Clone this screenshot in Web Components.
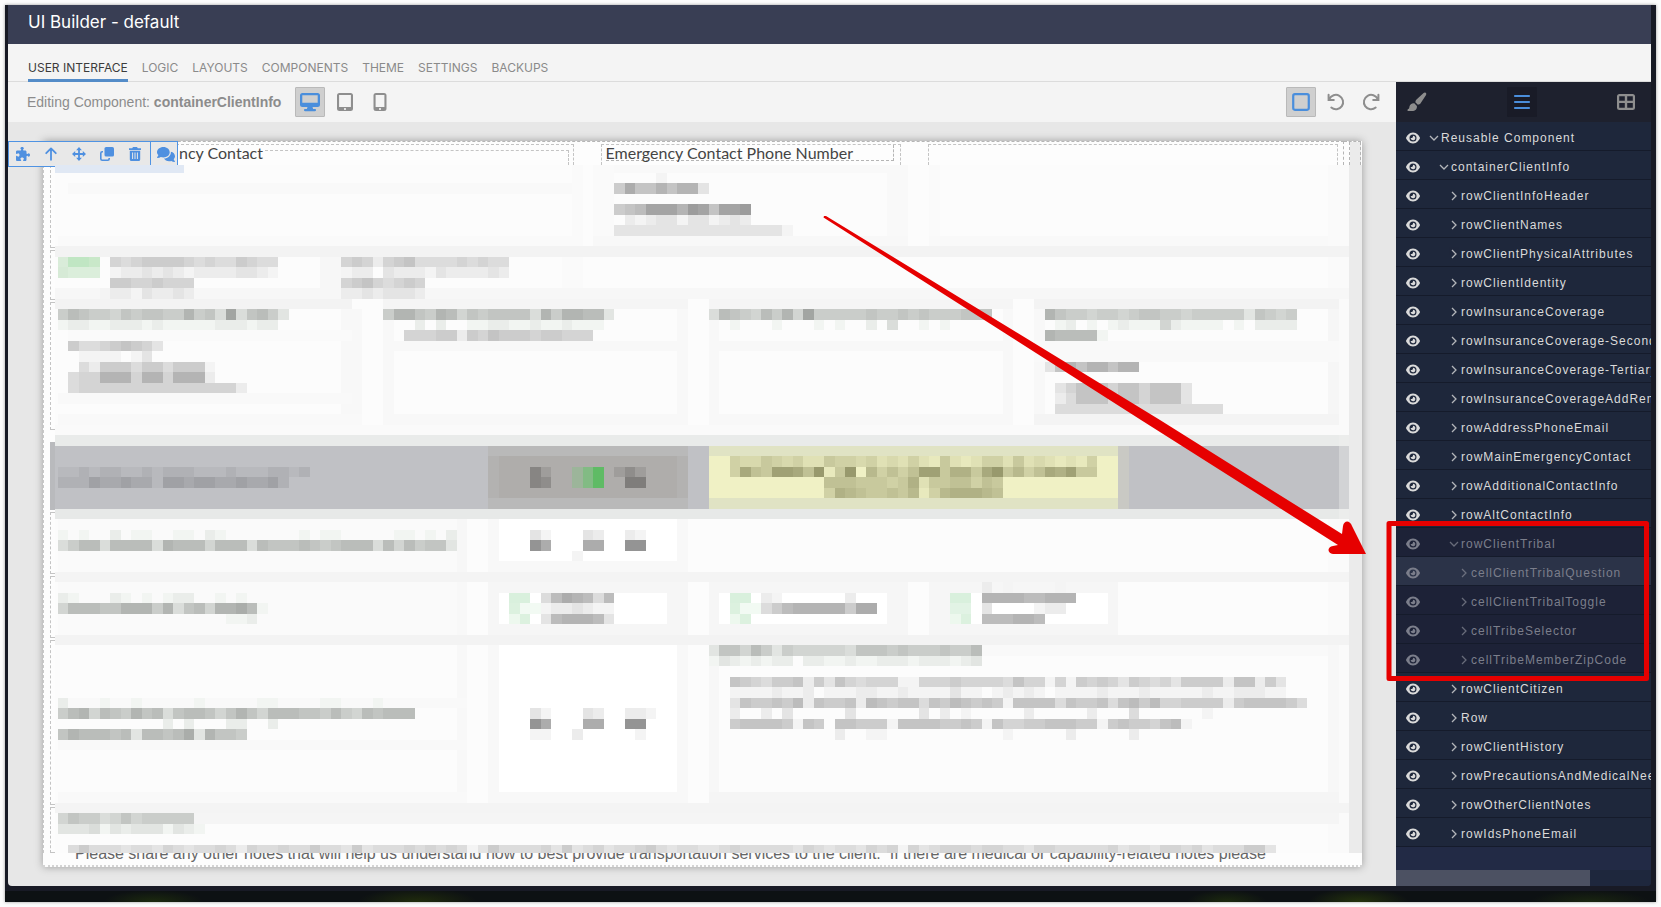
<!DOCTYPE html>
<html lang="en">
<head>
<meta charset="utf-8">
<title>UI Builder - default</title>
<style>
  html, body {
    height: 100%;
    margin: 0;
  }
  body {
    background-color: #fcfcfc;
    font-family: "Liberation Sans", Arial, sans-serif;
  }
</style>
</head>
<body>
<builder-app></builder-app>

<script>
/**
 * Icon shapes, keyed by name. Each entry holds the viewBox and the markup.
 */
const ICONS = {
  desktop: ['0 0 20 20', '<path fill="currentColor" fill-rule="evenodd" d="M2.5 1h15A2.5 2.5 0 0 1 20 3.500v9A2.500 2.500 0 0 1 17.500 15h-5l.6 2H15a1 1 0 0 1 0 2.200H5A1 1 0 0 1 5 17h1.900l.6-2h-5A2.500 2.500 0 0 1 0 12.500v-9A2.500 2.500 0 0 1 2.500 1zM2.300 3.300v7.500h15.400V3.300z"/>'],
  tablet: ['0 0 18 20', '<path fill="currentColor" fill-rule="evenodd" d="M3.500 1h11A2.500 2.500 0 0 1 17 3.500v13a2.500 2.500 0 0 1-2.500 2.500h-11A2.500 2.500 0 0 1 1 16.500v-13A2.500 2.500 0 0 1 3.500 1zm-.4 2.100v11.800h11.800V3.100zM9 15.900a1.100 1.100 0 1 0 0 2.200 1.100 1.100 0 0 0 0-2.200z"/>'],
  phone: ['0 0 18 20', '<path fill="currentColor" fill-rule="evenodd" d="M5 1h8a2.500 2.500 0 0 1 2.500 2.500v13A2.500 2.500 0 0 1 13 19H5a2.500 2.500 0 0 1-2.500-2.500v-13A2.500 2.500 0 0 1 5 1zm-.4 2.100v11.800h8.800V3.100zM9 15.900a1.100 1.100 0 1 0 0 2.200 1.100 1.100 0 0 0 0-2.200z"/>'],
  square: ['0 0 18 18', '<rect x="2" y="2" width="14" height="14" rx="1.500" fill="none" stroke="currentColor" stroke-width="2"/>'],
  undo: ['0 0 18 18', '<path fill="none" stroke="currentColor" stroke-width="2" stroke-linecap="round" d="M2.300 6.200A7.200 7.200 0 1 1 4.300 14.600M1.600 1.800v5.200h5.200"/>'],
  redo: ['0 0 18 18', '<path fill="none" stroke="currentColor" stroke-width="2" stroke-linecap="round" d="M15.700 6.200A7.200 7.200 0 1 0 13.700 14.600M16.400 1.800v5.200h-5.200"/>'],
  brush: ['0 0 20 20', '<path fill="currentColor" d="M18.600.7c.9.700.9 1.600.3 2.600l-5.300 8c-.7 1-1.700 1.400-2.700 1.500L8.300 10.200c.1-1 .4-1.800 1.200-2.600L16.600.9c.7-.6 1.400-.7 2-.2zM7.300 11.300l2.600 2.600c.4 3-1.600 5.200-5 5.200H1.300c-1.100 0-1.300-1.300-.3-1.800 1.200-.5 1.300-1.300 1.400-2.500.3-2.200 2.500-3.800 4.900-3.500z"/>'],
  bars: ['0 0 18 18', '<path fill="none" stroke="currentColor" stroke-width="2.200" stroke-linecap="round" d="M2 3h14M2 9h14M2 15h14"/>'],
  grid: ['0 0 20 20', '<path fill="currentColor" fill-rule="evenodd" d="M3.500 2h13A2.500 2.500 0 0 1 19 4.500v11a2.500 2.500 0 0 1-2.500 2.500h-13A2.500 2.500 0 0 1 1 15.500v-11A2.500 2.500 0 0 1 3.500 2zM3.200 4.200v4.500h5.600V4.200zm8 0v4.500h5.600V4.200zm-8 6.900v4.700h5.600v-4.700zm8 0v4.700h5.600v-4.700z"/>'],
  puzzle: ['0 0 512 512', '<path fill="currentColor" d="M192 104.800c0-9.200-5.800-17.300-13.200-22.800C167.200 73.300 160 61.300 160 48c0-26.500 28.700-48 64-48s64 21.500 64 48c0 13.300-7.200 25.300-18.800 34c-7.400 5.500-13.200 13.600-13.200 22.800c0 12.800 10.400 23.200 23.200 23.200H336c26.500 0 48 21.500 48 48v56.800c0 12.800 10.400 23.200 23.200 23.200c9.200 0 17.300-5.800 22.800-13.200c8.700-11.600 20.700-18.800 34-18.800c26.500 0 48 28.700 48 64s-21.500 64-48 64c-13.300 0-25.300-7.200-34-18.800c-5.500-7.400-13.600-13.200-22.800-13.200c-12.800 0-23.200 10.400-23.200 23.200V464c0 26.500-21.500 48-48 48H279.200c-12.800 0-23.200-10.400-23.200-23.200c0-9.200 5.800-17.300 13.200-22.800c11.600-8.700 18.800-20.700 18.800-34c0-26.500-28.700-48-64-48s-64 21.500-64 48c0 13.300 7.200 25.300 18.800 34c7.400 5.500 13.200 13.600 13.200 22.800c0 12.800-10.400 23.200-23.200 23.200H48c-26.500 0-48-21.500-48-48V343.200C0 330.400 10.400 320 23.200 320c9.200 0 17.300 5.800 22.800 13.200C54.700 344.800 66.700 352 80 352c26.500 0 48-28.700 48-64s-21.500-64-48-64c-13.300 0-25.300 7.200-34 18.800C40.500 250.200 32.400 256 23.200 256C10.400 256 0 245.600 0 232.800V176c0-26.500 21.500-48 48-48H168.800c12.800 0 23.200-10.400 23.200-23.200z"/>'],
  up: ['0 0 14 14', '<path fill="none" stroke="currentColor" stroke-width="1.800" stroke-linecap="round" stroke-linejoin="round" d="M7 12.800V1.500M2.200 6.200L7 1.400l4.800 4.800"/>'],
  move: ['0 0 14 14', '<path fill="currentColor" d="M7 0l2.900 3.200H7.900v2.900h2.900V4.100L14 7l-3.200 2.900V7.900H7.900v2.900h2L7 14l-2.900-3.200h2V7.900H3.200v2L0 7l3.200-2.900v2h2.900V3.200h-2z"/>'],
  copy: ['0 0 14 14', '<rect x="4.500" y="0" width="9.500" height="9.500" rx="1.600" fill="currentColor"/><path fill="none" stroke="currentColor" stroke-width="1.600" d="M3 4.800H2.200A1.400 1.400 0 0 0 .8 6.200v5.600a1.400 1.400 0 0 0 1.400 1.400h5.600a1.400 1.400 0 0 0 1.400-1.400V11"/>'],
  trash: ['0 0 14 14', '<path fill="currentColor" fill-rule="evenodd" d="M5 0h4l.8 1.200H13v1.700H1V1.200h3.200zM1.800 3.700h10.400v8.700a1.600 1.600 0 0 1-1.600 1.600H3.400a1.600 1.600 0 0 1-1.600-1.600zM4.100 5.600v6.400h1V5.600zm2.400 0v6.400h1V5.600zm2.400 0v6.400h1V5.600z"/>'],
  chat: ['0 0 18 15', '<path fill="currentColor" d="M6.400 0c3.600 0 6.300 2.300 6.300 5.200s-2.700 5.200-6.300 5.200c-.9 0-1.800-.2-2.600-.5-.9.600-2 1-3.300 1-.5 0-.6-.5-.3-.8.600-.6 1-1.300 1.200-2.100C.5 7.200 0 6.200 0 5.200 0 2.300 2.800 0 6.400 0zM13.800 4.700c2.500.4 4.200 2.300 4.200 4.600 0 1.100-.5 2.100-1.300 2.900.2.700.6 1.300 1.100 1.900.3.300.1.800-.3.800-1.200 0-2.300-.4-3.100-1-.7.200-1.500.4-2.300.4-2.300 0-4.300-1.100-5.100-2.700 3.700-.1 6.900-2.700 6.900-6.300z"/>'],
  eye: ['0 0 576 512', '<path fill="currentColor" d="M288 32c-80.800 0-145.500 36.800-192.600 80.600C48.600 156 17.300 208 2.500 243.700c-3.300 7.900-3.300 16.700 0 24.600C17.300 304 48.600 356 95.400 399.400C142.500 443.200 207.200 480 288 480s145.500-36.800 192.600-80.600c46.800-43.500 78.100-95.400 93-131.100c3.300-7.900 3.300-16.700 0-24.600c-14.900-35.700-46.200-87.700-93-131.100C433.500 68.800 368.800 32 288 32zM144 256a144 144 0 1 1 288 0 144 144 0 1 1-288 0zm144-64c0 35.300-28.700 64-64 64c-7.100 0-13.900-1.200-20.300-3.300c-5.500-1.800-11.900 1.600-11.700 7.400c.3 6.900 1.300 13.800 3.200 20.700c13.700 51.200 66.400 81.600 117.600 67.900s81.600-66.400 67.900-117.600c-11.100-41.500-47.800-69.400-88.600-71.100c-5.800-.2-9.200 6.100-7.400 11.700c2.100 6.400 3.300 13.200 3.300 20.300z"/>'],
  right: ['0 0 10 10', '<path fill="none" stroke="currentColor" stroke-width="1.300" d="M3 1l4 4-4 4"/>'],
  down: ['0 0 10 10', '<path fill="none" stroke="currentColor" stroke-width="1.300" d="M1 3l4 4 4-4"/>']
}

/**
 * Attaches an open shadow root holding the given markup.
 *
 * @param {HTMLElement} host - The element to render into.
 * @param {string} markup - Styles and markup.
 * @returns {ShadowRoot} The shadow root.
 */
const render = (host, markup) => {
  const template = document.createElement('template')
  template.innerHTML = markup
  const root = host.attachShadow({ mode: 'open' })
  root.appendChild(template.content.cloneNode(true))
  return root
}

customElements.define('ui-icon',
  /**
   * Represents an icon, picked with the name attribute.
   */
  class extends HTMLElement {
    connectedCallback () {
      if (this.shadowRoot) return
      const [box, shape] = ICONS[this.getAttribute('name')]
      render(this, `
        <style>
          :host { display: inline-flex; width: 18px; height: 18px; flex: none; }
          svg { width: 100%; height: 100%; }
        </style>
        <svg viewBox="${box}" aria-hidden="true">${shape}</svg>
      `)
    }
  }
)

customElements.define('tool-button',
  /**
   * Represents a square icon button.
   */
  class extends HTMLElement {
    connectedCallback () {
      if (this.shadowRoot) return
      render(this, `
        <style>
          :host { display: block; color: #8e8e8e; }
          button {
            display: flex;
            align-items: center;
            justify-content: center;
            box-sizing: border-box;
            width: 30px;
            height: 30px;
            padding: 0;
            border: 1px solid transparent;
            border-radius: 1px;
            background: none;
            color: inherit;
            cursor: pointer;
          }
          :host([active]) { color: #4a8edc; }
          :host([active]) button { background-color: #cfcfcf; border-color: #b9b9b9; }
          :host([dark][active]) button { background-color: #191b27; border-color: #191b27; }
          ui-icon { width: 20px; height: 20px; }
          :host([small]) ui-icon { width: 18px; height: 18px; }
        </style>
        <button aria-label="${this.getAttribute('label')}"><ui-icon name="${this.getAttribute('icon')}"></ui-icon></button>
      `)
    }
  }
)

customElements.define('app-header',
  /**
   * Represents the title bar.
   */
  class extends HTMLElement {
    constructor () {
      super()
      render(this, `
        <style>
          :host {
            display: flex;
            align-items: center;
            box-sizing: border-box;
            height: 39px;
            padding: 0 20px 6px;
            background-color: #393e54;
            color: #fff;
          }
          h1 { margin: 0; font: 400 17px/22px Inter, sans-serif; }
        </style>
        <h1><slot></slot></h1>
      `)
    }
  }
)

customElements.define('app-tabs',
  /**
   * Represents the main navigation.
   */
  class extends HTMLElement {
    constructor () {
      super()
      render(this, `
        <style>
          :host {
            display: flex;
            align-items: flex-end;
            gap: 14px;
            box-sizing: border-box;
            height: 38px;
            padding: 0 20px;
            background-color: #f4f4f4;
            border-bottom: 1px solid #dcdcdc;
          }
          ::slotted(a) {
            padding-bottom: 1px;
            border-bottom: 3px solid transparent;
            margin-bottom: -1px;
            color: #8a8a8a;
            font: 400 12px/20px Inter, sans-serif;
            text-decoration: none;
          }
          ::slotted(a[aria-current]) {
            border-color: #548cc8;
            color: #3c3c3c;
          }
        </style>
        <slot></slot>
      `)
    }
  }
)

customElements.define('editor-toolbar',
  /**
   * Represents the bar above the canvas.
   */
  class extends HTMLElement {
    constructor () {
      super()
      render(this, `
        <style>
          :host {
            display: flex;
            align-items: center;
            gap: 5px;
            box-sizing: border-box;
            height: 40px;
            padding: 0 10px 0 19px;
            background-color: #f4f4f4;
            color: #8c8c8c;
            font-size: 14px;
          }
          p { margin: 0 9px 0 0; }
          .space { flex: 1; }
        </style>
        <p>Editing Component: <b><slot></slot></b></p>
        <tool-button icon="desktop" label="Desktop" active></tool-button>
        <tool-button icon="tablet" label="Tablet"></tool-button>
        <tool-button icon="phone" label="Phone"></tool-button>
        <span class="space"></span>
        <tool-button icon="square" label="Borders" active></tool-button>
        <tool-button icon="undo" label="Undo" small></tool-button>
        <tool-button icon="redo" label="Redo" small></tool-button>
      `)
    }
  }
)

customElements.define('component-actions',
  /**
   * Represents the floating actions of the selected component.
   */
  class extends HTMLElement {
    constructor () {
      super()
      render(this, `
        <style>
          :host {
            display: flex;
            box-sizing: border-box;
            width: 170px;
            height: 26px;
            border: 1px solid #4f93e3;
            background-color: #e8e8e8;
            color: #4f90e0;
          }
          .group { display: flex; flex: 1; justify-content: space-between; padding: 0 8px 0 7px; }
          .group + .group { flex: none; padding: 0 2px 0 6px; border-left: 1px solid #4f93e3; }
          button { display: flex; align-items: center; padding: 0; border: 0; background: none; color: inherit; }
          ui-icon { width: 14px; height: 14px; }
          .chat { width: 18px; height: 15px; }
        </style>
        <div class="group">
          <button aria-label="Component"><ui-icon name="puzzle"></ui-icon></button>
          <button aria-label="Select parent"><ui-icon name="up"></ui-icon></button>
          <button aria-label="Move"><ui-icon name="move"></ui-icon></button>
          <button aria-label="Copy"><ui-icon name="copy"></ui-icon></button>
          <button aria-label="Delete"><ui-icon name="trash"></ui-icon></button>
        </div>
        <div class="group">
          <button aria-label="Comments"><ui-icon class="chat" name="chat"></ui-icon></button>
        </div>
      `)
    }
  }
)

// Flat areas of the pixelated form: column, row, width, height, colour.
const AREAS = [
  [-1, 0, 124, 66, '#fcfcfc'],
  [-1, 0, 13, 1, '#e0e8f4'],
  [1, 2, 48, 1, '#f9f9f9'], [49, 0, 1, 8, '#fafafa'], [0, 7, 50, 1, '#fafafa'],
  [51, 0, 30, 1, '#f9f9f9'], [51, 0, 2, 8, '#fafafa'], [79, 0, 2, 8, '#f9f9f9'], [51, 7, 30, 1, '#f8f8f8'],
  [83, 0, 1, 8, '#fafafa'], [83, 7, 39, 1, '#f9f9f9'], [121, 0, 2, 66, '#fafafa'],
  [-1, 8, 124, 1, '#f3f3f3'],
  [25, 9, 2, 4, '#f7f7f7'], [48, 9, 2, 4, '#fafafa'], [-1, 12, 124, 1, '#f7f7f7'],
  [-1, 13, 29, 1, '#f3f3f3'], [31, 13, 29, 1, '#f5f5f5'], [62, 13, 29, 1, '#f5f5f5'], [93, 13, 29, 1, '#f3f3f3'],
  [27, 14, 2, 11, '#f8f8f8'], [31, 14, 1, 11, '#f8f8f8'], [59, 14, 1, 11, '#f8f8f8'],
  [62, 14, 1, 11, '#f8f8f8'], [90, 14, 1, 11, '#f8f8f8'], [93, 14, 1, 11, '#f8f8f8'], [121, 14, 1, 11, '#f6f6f6'],
  [1, 16, 27, 1, '#fafafa'], [31, 17, 29, 1, '#f8f8f8'], [62, 17, 29, 1, '#f8f8f8'], [93, 17, 29, 2, '#f9f9f9'],
  [0, 22, 28, 1, '#f9f9f9'], [0, 24, 29, 1, '#f9f9f9'], [31, 24, 29, 1, '#f8f8f8'], [62, 24, 29, 1, '#f8f8f8'], [93, 24, 29, 1, '#f4f4f4'],
  [-1, 25, 124, 1, '#fafafa'],
  // highlighted row
  [-1, 26, 124, 1, '#e9ebea'], [-1, 27, 124, 6, '#c0c1c5'], [-1, 33, 124, 1, '#e7e9e8'],
  [41, 27, 19, 6, '#b9b9b9'], [41, 28, 19, 4, '#b3b2b1'], [42, 28, 17, 4, '#afadab'],
  [62, 27, 39, 6, '#e0e3c4'], [62, 28, 39, 4, '#f0f1c5'], [101, 27, 1, 6, '#c9c9c4'],
  [122, 26, 1, 8, '#ecedec'], [122, 27, 1, 6, '#d2d3d5'],
  // question with a toggle
  [0, 34, 39, 5, '#fafafa'], [38, 34, 1, 5, '#f7f7f7'], [41, 34, 19, 5, '#f8f8f8'], [42, 34, 17, 4, '#ffffff'],
  [-1, 39, 124, 1, '#f4f4f4'],
  // check boxes
  [0, 40, 39, 5, '#fafafa'], [38, 40, 1, 5, '#f8f8f8'], [41, 40, 19, 5, '#f6f6f6'], [42, 41, 16, 3, '#ffffff'],
  [62, 40, 19, 5, '#f6f6f6'], [63, 41, 16, 3, '#ffffff'], [83, 40, 18, 5, '#f6f6f6'], [85, 41, 15, 3, '#ffffff'],
  [-1, 45, 124, 1, '#f3f3f3'],
  // comments block
  [38, 46, 1, 15, '#f8f8f8'], [0, 51, 39, 1, '#f9f9f9'], [0, 55, 39, 1, '#f9f9f9'], [0, 60, 39, 1, '#f9f9f9'],
  [41, 46, 19, 15, '#f8f8f8'], [42, 46, 17, 14, '#ffffff'],
  [62, 46, 1, 15, '#f7f7f7'], [63, 46, 59, 1, '#f9f9f9'], [121, 46, 1, 15, '#f7f7f7'], [62, 60, 60, 1, '#f5f5f5'],
  [-1, 61, 124, 1, '#f4f4f4'], [0, 62, 122, 1, '#f5f5f5'],
  // green marks
  [0, 9, 1, 1, '#d9ecd9'], [1, 9, 2, 1, '#c0e6c3'], [3, 9, 1, 1, '#c9e8c9'],
  [0, 10, 1, 1, '#d6ead6'], [1, 10, 3, 1, '#dbeedb'],
  [49, 29, 1, 2, '#9cb59a'], [50, 29, 1, 2, '#82bb84'], [51, 29, 1, 2, '#5fbb65'],
  [43, 41, 2, 1, '#d9f0dd'], [43, 42, 1, 1, '#dcf1df'], [44, 42, 2, 1, '#f2faf3'], [43, 43, 1, 1, '#edf8ee'], [44, 43, 1, 1, '#dcf1df'],
  [64, 41, 2, 1, '#d9f0dd'], [64, 42, 1, 1, '#dcf1df'], [65, 42, 2, 1, '#f2faf3'], [64, 43, 1, 1, '#edf8ee'], [65, 43, 1, 1, '#dcf1df'],
  [85, 41, 2, 1, '#d9f0dd'], [85, 42, 2, 1, '#e2f3e5'], [85, 43, 1, 1, '#edf8ee'], [86, 43, 1, 1, '#dcf1df']
]

const PAPER = [252, 252, 252]
const SAGE = [250, 253, 250]
const BAND = [192, 193, 197]
const TOGGLE = [175, 173, 171]
const YELLOW = [240, 241, 197]

// Pixelated words: row, first column, base colour, darkness of each pixel in hex.
const WORDS = [
  [1, 57, PAPER, '1'],
  [2, 53, PAPER, '6a7797993'],
  [4, 53, PAPER, '678bbb9cb7bbc'],
  [5, 54, PAPER, '212331331232'],
  [6, 53, PAPER, '33333333333333331'],
  [9, 5, PAPER, '5456666545446544'],
  [10, 5, PAPER, '1223232122223321'],
  [11, 5, PAPER, '66556555'],
  [12, 4, PAPER, '122132232'],
  [9, 27, PAPER, '5652567444454544'],
  [10, 27, PAPER, '1220322213222232'],
  [11, 27, PAPER, '56754565'],
  [12, 27, PAPER, '22323332'],
  [14, 0, SAGE, '6876657677669674b47863'],
  [15, 0, SAGE, '122112221211111222122'],
  [17, 1, PAPER, '644567653'],
  [18, 2, PAPER, '1111013'],
  [19, 2, PAPER, '4266646646661'],
  [20, 1, PAPER, '45599959959992'],
  [21, 1, PAPER, '45555555555555552'],
  [14, 31, SAGE, '6997698576777749699883'],
  [15, 33, SAGE, '02020011221121121110'],
  [16, 33, PAPER, '555662657666566555'],
  [14, 62, SAGE, '487658695b66666766767666777'],
  [15, 63, SAGE, '0100010001010020400101'],
  [14, 94, SAGE, '976656656776656666637656'],
  [15, 95, SAGE, '12010121115211110102222'],
  [16, 94, SAGE, '988881'],
  [19, 94, PAPER, '379799799'],
  [21, 95, PAPER, '3577757757773'],
  [22, 95, PAPER, '2477747757773'],
  [23, 95, PAPER, '4444444444444444'],
  [29, 0, BAND, '112122112122211121112212'],
  [30, 0, BAND, '22243343314434433433420'],
  [29, 45, TOGGLE, '52'], [30, 45, TOGGLE, '54'],
  [29, 53, TOGGLE, '242'], [30, 53, TOGGLE, '066'],
  [28, 64, YELLOW, '43354342254434232421521244252321214'],
  [29, 64, YELLOW, '4965aa96b15b074646aa58859b574698a55'],
  [30, 73, YELLOW, '66655545825566465'],
  [31, 73, YELLOW, '48765565714788876'],
  [35, 0, SAGE, '10100201100110210000000101100000110102'],
  [36, 0, SAGE, '46884888849888588848777876788848586773'],
  [35, 45, PAPER, '310003200210'], [36, 45, PAPER, 'da000aa00dd'], [37, 49, PAPER, '1'],
  [41, 0, SAGE, '2100021010122001010'],
  [42, 0, SAGE, '58887799969478599a81'],
  [43, 16, SAGE, '112'],
  [41, 46, PAPER, '48a9848'], [42, 46, PAPER, '1223211'], [43, 46, PAPER, '3899983'],
  [41, 67, PAPER, '210000002'], [42, 67, PAPER, '468999996aa'],
  [40, 88, PAPER, '20100001'], [41, 88, PAPER, '999988999'], [42, 88, PAPER, '300001220'], [43, 88, PAPER, '888998'],
  [51, 0, SAGE, '2000100100000100000110000110001'],
  [52, 0, SAGE, '6895876978478875797588877686587888'],
  [53, 8, SAGE, '002020002200200'],
  [54, 0, SAGE, '798887838878a39776'],
  [52, 45, PAPER, '310003200221'], [53, 45, PAPER, 'da000aa00dd'], [54, 45, PAPER, '11002000001'],
  [46, 62, SAGE, '37758636555554777676667668'],
  [47, 62, SAGE, '13212122022112112221222123'],
  [49, 64, PAPER, '76546672637545551155565555475515165653654536666277263'],
  [50, 64, PAPER, '11112112011122112111131101212101111211121111121122211'],
  [51, 64, PAPER, '3766768276672876774768767617777476674786855666626777764'],
  [52, 64, PAPER, '2002030000030000003020100000200000200040000001'],
  [53, 64, PAPER, '67777617607766617777667617556677766167665781'],
  [54, 74, PAPER, '20011000000000001000002000002'],
  [62, 0, SAGE, '5766457566666'],
  [63, 0, SAGE, '33341323331321'],
  [65, 1, PAPER, '4644434435434454254454464436344454545413644445363453445643443345444443543443545153455545544355444445344355453444663']
]

customElements.define('pixel-form',
  /**
   * Represents a form whose content is hidden behind large pixels.
   */
  class extends HTMLElement {
    constructor () {
      super()
      const areas = AREAS.map(([x, y, w, h, fill]) =>
        `<rect x="${x}" y="${y}" width="${w}" height="${h}" fill="${fill}"/>`)
      const words = WORDS.map(([y, x, base, shades]) => [...shades].map((shade, i) => {
        const dark = parseInt(shade, 16) * 8
        if (!dark) return ''
        return `<rect x="${x + i}" y="${y}" width="1" height="1" fill="rgb(${base.map(c => c - dark)})"/>`
      }).join(''))
      render(this, `
        <style>
          :host { display: block; min-height: 0; overflow: hidden; }
          svg { display: block; width: 100%; height: 100%; }
        </style>
        <svg viewBox="0 0 1294 688" preserveAspectRatio="none" shape-rendering="crispEdges" aria-hidden="true">
          <g transform="translate(2.500 -3) scale(10.500)">${areas.join('')}${words.join('')}</g>
        </svg>
      `)
    }
  }
)

customElements.define('form-page',
  /**
   * Represents the page being edited, with its dashed outlines.
   */
  class extends HTMLElement {
    constructor () {
      super()
      render(this, `
        <style>
          :host {
            display: grid;
            grid-template: 24px 1fr 14px / 12px 1fr 13px;
            background-color: #fdfdfd;
            box-shadow: 0 0 8px #9a9a9a;
            color: #444;
          }
          .labels {
            grid-column: 1 / 4;
            display: flex;
            box-sizing: border-box;
            padding-right: 1px;
            overflow: hidden;
          }
          .cells {
            flex: 1;
            display: grid;
            grid-template-columns: 518fr 301fr 410fr;
            column-gap: 27px;
            box-sizing: border-box;
            padding: 2px 5px 0 13px;
            border-top: 1px dashed #b5b5b5;
            border-right: 1px dashed #b5b5b5;
          }
          .lines { display: flex; border-top: 1px dashed #b5b5b5; }
          .lines i { width: 5px; border-right: 1px dashed #b5b5b5; }
          .lines .last { width: 10px; background-color: #ebebeb; }
          .cell {
            border: 1px dashed #c4c4c4;
            border-bottom: 0;
            font: 400 16px/16px Lato, sans-serif;
            min-width: 0;
          }
          .label { white-space: nowrap; }
          .first { display: flex; padding-right: 4px; }
          .first .label { padding-left: 122px; }
          .first .fill { flex: 1; margin: 5px 0 0 2px; border: 1px dashed #c4c4c4; border-width: 1px 1px 0 0; }
          .second .label { margin: 0 6px 0 4px; border-right: 1px dashed #b5b5b5; border-bottom: 1px dashed #b5b5b5; height: 15px; }
          .rows { display: flex; flex-direction: column; gap: 2px; padding-left: 6px; border-left: 1px dashed #c8c8c8; min-height: 0; }
          .rows i { border: 1px dashed #c4c4c4; border-right: 0; }
          .rows .mark { margin: 10px 0 0; border: 0; background-color: #b9babd; }
          .edge { background-color: #ebebeb; }
          .note {
            grid-column: 1 / 4;
            box-sizing: border-box;
            padding: 0 32px;
            border-bottom: 2px dotted #d4d4d4;
            overflow: hidden;
          }
          .clip { display: flex; align-items: flex-end; height: 10px; overflow: hidden; }
          p { margin: 0; color: #666; font-size: 16px; line-height: 18px; white-space: pre; }
        </style>
        <div class="labels">
          <div class="cells">
            <div class="cell first"><div class="label"><slot name="first"></slot></div><div class="fill"></div></div>
            <div class="cell second"><div class="label"><slot name="second"></slot></div></div>
            <div class="cell"></div>
          </div>
          <div class="lines"><i></i><i class="last"></i></div>
        </div>
        <div class="rows">
          <i style="flex: 83"></i>
          <i style="flex: 49"></i>
          <i style="flex: 129"></i>
          <i class="mark" style="flex: 69"></i>
          <i style="flex: 62"></i>
          <i style="flex: 61"></i>
          <i style="flex: 167"></i>
          <i style="flex: 45"></i>
        </div>
        <pixel-form></pixel-form>
        <div class="edge"></div>
        <div class="note"><div class="clip"><p><slot name="note"></slot></p></div></div>
      `)
    }
  }
)

customElements.define('layer-row',
  /**
   * Represents one row of the layer tree.
   */
  class extends HTMLElement {
    connectedCallback () {
      if (this.shadowRoot) return
      const level = Number(this.getAttribute('level'))
      const icon = this.hasAttribute('open') ? 'down' : 'right'
      render(this, `
        <style>
          :host {
            display: flex;
            align-items: center;
            box-sizing: border-box;
            height: 29px;
            padding: 3px 0 0 10px;
            border-bottom: 1px solid #151b2b;
            background-color: #1e273b;
            color: #dadada;
            font-size: 12px;
            letter-spacing: 1px;
            white-space: nowrap;
            overflow: hidden;
          }
          :host([muted]) { background-color: #1d2237; color: #7b7e8b; }
          :host([selected]) { background-color: #2b3348; }
          button { display: flex; padding: 0; border: 0; background: none; color: inherit; }
          .eye { width: 14px; height: 14px; }
          .toggle { margin-left: ${9 + level * 10}px; padding-right: 2px; opacity: .8; }
          .toggle ui-icon { width: 10px; height: 10px; }
        </style>
        <button aria-label="Toggle visibility"><ui-icon class="eye" name="eye"></ui-icon></button>
        <button class="toggle" aria-label="Expand"><ui-icon name="${icon}"></ui-icon></button>
        <span><slot></slot></span>
      `)
    }
  }
)

customElements.define('layer-panel',
  /**
   * Represents the side panel with the layer tree.
   */
  class extends HTMLElement {
    constructor () {
      super()
      render(this, `
        <style>
          :host {
            display: flex;
            flex-direction: column;
            width: 255px;
            flex: none;
            background-color: #222a45;
          }
          nav {
            display: flex;
            align-items: center;
            justify-content: space-between;
            height: 40px;
            padding: 0 10px 0 6px;
            background-color: #1e212e;
          }
          .tree { flex: 1; min-height: 0; overflow: hidden; }
          .scroll { height: 16px; background-color: #1e273d; }
          .thumb { width: 76%; height: 100%; background-color: #4c5162; }
        </style>
        <nav>
          <tool-button dark icon="brush" label="Styles"></tool-button>
          <tool-button dark small active icon="bars" label="Layers"></tool-button>
          <tool-button dark icon="grid" label="Blocks"></tool-button>
        </nav>
        <div class="tree"><slot></slot></div>
        <div class="scroll"><div class="thumb"></div></div>
      `)
    }
  }
)

customElements.define('builder-app',
  /**
   * Represents the whole builder window.
   */
  class extends HTMLElement {
    constructor () {
      super()
      render(this, `
        <style>
          :host {
            position: relative;
            display: flex;
            box-sizing: border-box;
            height: 100vh;
            padding: 5px;
          }
          .desktop {
            display: flex;
            flex: 1;
            flex-direction: column;
            min-width: 0;
            background: #181a25;
            box-shadow: 0 0 3px #999;
          }
          .window {
            display: flex;
            flex: 1;
            flex-direction: column;
            min-height: 0;
            margin: 0 5px 5px 3px;
            border-radius: 0 0 4px 4px;
            overflow: hidden;
          }
          .wall {
            height: 11px;
            background:
              radial-gradient(ellipse 50px 12px at 9% 100%, #1c2a0e, transparent),
              radial-gradient(ellipse 60px 14px at 25% 100%, #202c0c, transparent),
              radial-gradient(ellipse 40px 12px at 74% 100%, #1c2a0e, transparent),
              radial-gradient(ellipse 50px 14px at 82% 100%, #24330c, transparent),
              radial-gradient(ellipse 60px 12px at 96% 100%, #1a2610, transparent),
              #0d1113;
          }
          main { display: flex; flex: 1; min-height: 0; }
          .editor { display: flex; flex: 1; flex-direction: column; min-width: 0; }
          .canvas {
            position: relative;
            display: flex;
            flex: 1;
            min-height: 0;
            padding: 19px 34px 19px 35px;
            background-color: #e7e7e7;
          }
          form-page { flex: 1; min-width: 0; }
          component-actions { position: absolute; top: 19px; left: 0; clip-path: polygon(0 0, 100% 0, 100% 24px, 47px 24px, 47px 100%, 0 100%); }
          .notes { position: absolute; inset: 0; width: 100%; height: 100%; pointer-events: none; }
        </style>
        <div class="desktop">
          <div class="window">
            <app-header>UI Builder - default</app-header>
            <app-tabs>
              <a href="#ui" aria-current="page">USER INTERFACE</a>
              <a href="#logic">LOGIC</a>
              <a href="#layouts">LAYOUTS</a>
              <a href="#components">COMPONENTS</a>
              <a href="#theme">THEME</a>
              <a href="#settings">SETTINGS</a>
              <a href="#backups">BACKUPS</a>
            </app-tabs>
            <main>
              <div class="editor">
                <editor-toolbar>containerClientInfo</editor-toolbar>
                <div class="canvas">
                  <form-page>
                    <span slot="first">ncy Contact</span>
                    <span slot="second">Emergency Contact Phone Number</span>
                    <span slot="note">Please share any other notes that will help us understand how to best provide transportation services to the client.  If there are medical or capability-related notes please</span>
                  </form-page>
                  <component-actions></component-actions>
                </div>
              </div>
              <layer-panel>
                <layer-row level="0" open>Reusable Component</layer-row>
                <layer-row level="1" open>containerClientInfo</layer-row>
                <layer-row level="2">rowClientInfoHeader</layer-row>
                <layer-row level="2">rowClientNames</layer-row>
                <layer-row level="2">rowClientPhysicalAttributes</layer-row>
                <layer-row level="2">rowClientIdentity</layer-row>
                <layer-row level="2">rowInsuranceCoverage</layer-row>
                <layer-row level="2">rowInsuranceCoverage-Secondary</layer-row>
                <layer-row level="2">rowInsuranceCoverage-Tertiary</layer-row>
                <layer-row level="2">rowInsuranceCoverageAddRemove</layer-row>
                <layer-row level="2">rowAddressPhoneEmail</layer-row>
                <layer-row level="2">rowMainEmergencyContact</layer-row>
                <layer-row level="2">rowAdditionalContactInfo</layer-row>
                <layer-row level="2">rowAltContactInfo</layer-row>
                <layer-row level="2" open muted>rowClientTribal</layer-row>
                <layer-row level="3" muted selected>cellClientTribalQuestion</layer-row>
                <layer-row level="3" muted>cellClientTribalToggle</layer-row>
                <layer-row level="3" muted>cellTribeSelector</layer-row>
                <layer-row level="3" muted>cellTribeMemberZipCode</layer-row>
                <layer-row level="2">rowClientCitizen</layer-row>
                <layer-row level="2">Row</layer-row>
                <layer-row level="2">rowClientHistory</layer-row>
                <layer-row level="2">rowPrecautionsAndMedicalNeeds</layer-row>
                <layer-row level="2">rowOtherClientNotes</layer-row>
                <layer-row level="2">rowIdsPhoneEmail</layer-row>
              </layer-panel>
            </main>
          </div>
          <div class="wall"></div>
        </div>
        <svg class="notes" viewBox="0 0 1661 907" preserveAspectRatio="none" aria-hidden="true">
          <rect x="1389" y="523.500" width="257.500" height="155" fill="none" stroke="#e60000" stroke-width="5" stroke-linejoin="round"/>
          <path fill="#e60000" d="M824 216l2 0L1160 420l182 114 1-8c1-6 7-6 9 0l14 28-33 0c-6-1-6-7 0-8l5-1L1141 420 823.500 217.500z"/>
        </svg>
      `)
    }
  }
)
</script>
</body>
</html>
